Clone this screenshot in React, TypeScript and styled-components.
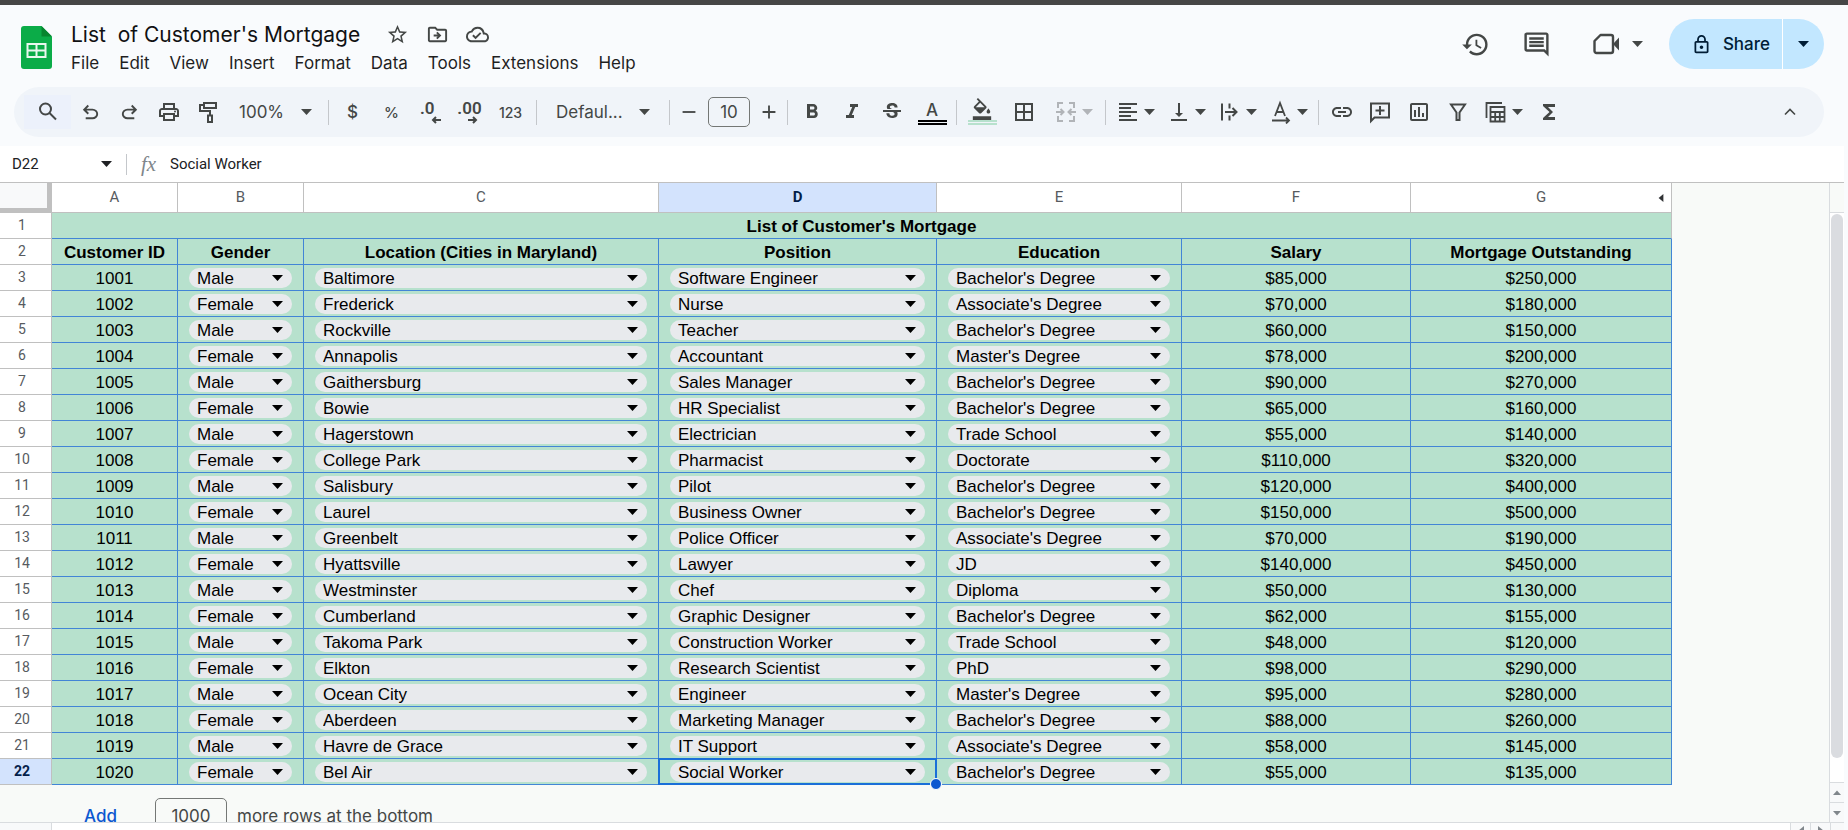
import React, { useState } from 'react';
import styled, { createGlobalStyle, css } from 'styled-components';
import {
  MdBorderAll,
  MdFormatAlignLeft,
  MdFormatBold,
  MdFormatColorFill,
  MdFormatItalic,
  MdFunctions,
  MdHistory,
  MdLink,
  MdOutlineCloudDone,
  MdOutlineComment,
  MdOutlineDriveFileMove,
  MdOutlineInsertChart,
  MdOutlineLock,
  MdOutlinePrint,
  MdStarBorder,
  MdStrikethroughS,
  MdVerticalAlignBottom,
} from 'react-icons/md';

const ui = "Inter, 'Open Sans', sans-serif";
const roboto = 'Roboto, Arial, sans-serif';
const arial = "'Liberation Sans', Arial, sans-serif";

const color = {
  chrome: '#f9fbfd',
  toolbar: '#f0f4f9',
  icon: '#444746',
  rule: '#c0c0c0',
  softRule: '#d9dcdf',
  canvas: '#f8faf8',
  cell: '#b7e1cd',
  cellLine: '#4285d6',
  chip: '#e8eaed',
  active: '#d3e3fd',
  select: '#1a6fd8',
};

const GlobalStyle = createGlobalStyle`
  *, *::before, *::after { box-sizing: border-box; }
  body { margin: 0; background: ${color.chrome}; font-family: ${ui}; }
  button, input, select { font: inherit; color: inherit; margin: 0; }
  button { border: 0; background: none; padding: 0; cursor: pointer; }
`;

const Page = styled.div`
  display: flex;
  flex-direction: column;
  height: 100vh;
  overflow: hidden;
`;

const TopStrip = styled.div`
  flex: none;
  height: 5px;
  background: #464646;
`;

/* ---------- header ---------- */

const Header = styled.header`
  flex: none;
  display: flex;
  align-items: flex-start;
  height: 82px;
  padding: 14px 24px 0 21px;
`;

const Logo = styled.svg`
  flex: none;
  width: 31px;
  height: 43px;
  margin-top: 7px;
`;

const Heading = styled.div`
  display: flex;
  flex-direction: column;
  margin-left: 19px;
`;

const TitleRow = styled.div`
  display: flex;
  align-items: center;
  height: 30px;
`;

const TitleInput = styled.input`
  width: 306px;
  height: 30px;
  padding: 0;
  border: 0;
  outline: 0;
  background: none;
  color: #101112;
  font-size: 21px;
`;

const TitleButton = styled.button`
  display: grid;
  place-items: center;
  width: 40px;
  height: 30px;
  color: ${color.icon};
  font-size: 23px;
`;

const Menus = styled.nav`
  display: flex;
  gap: 20px;
`;

const MenuButton = styled.button`
  height: 28px;
  color: #1f1f1f;
  font-size: 17px;
`;

const HeaderActions = styled.div`
  display: flex;
  align-items: center;
  height: 50px;
  margin-left: auto;
  color: ${color.icon};
`;

const ActionButton = styled.button`
  display: flex;
  align-items: center;
  justify-content: center;
  gap: 12px;
  width: 61px;
  height: 50px;
  font-size: 29px;
`;

const MeetButton = styled(ActionButton)`
  width: 102px;
`;

const ShareGroup = styled.div`
  display: flex;
  height: 50px;
  border-radius: 25px;
  overflow: hidden;
  background: #c2e7ff;
  color: #001d35;
`;

const ShareButton = styled.button`
  display: flex;
  align-items: center;
  gap: 11px;
  padding: 0 12px 0 22px;
  font-size: 17px;
  font-weight: 500;
  svg { font-size: 21px; }
`;

const ShareMenu = styled.button`
  display: grid;
  place-items: center;
  width: 42px;
  border-left: 1px solid #fff;
`;

/* ---------- toolbar ---------- */

const Toolbar = styled.div`
  flex: none;
  display: flex;
  align-items: center;
  height: 50px;
  margin: 0 24px 9px 14px;
  padding: 0 15px 0 10px;
  border-radius: 25px;
  background: ${color.toolbar};
  color: ${color.icon};
`;

const Tool = styled.button<{ $w?: number; $faded?: boolean; $lit?: boolean }>`
  flex: none;
  display: flex;
  align-items: center;
  justify-content: center;
  gap: 4px;
  width: ${(p) => p.$w ?? 39}px;
  height: 34px;
  font-size: 24px;
  ${(p) => p.$faded && css`color: #b1b4b8;`}
  ${(p) => p.$lit && css`background: #ecf1fb;`}
`;

const GlyphTool = styled(Tool)<{ $size: number }>`
  font-size: ${(p) => p.$size}px;
  font-weight: 500;
`;

const DecimalLabel = styled.span<{ $overhang?: number }>`
  display: flex;
  flex-direction: column;
  align-items: flex-start;
  font-family: ${roboto};
  font-size: 17px;
  font-weight: 600;
  line-height: 15px;
  svg { margin-left: ${(p) => p.$overhang ?? 0}px; }
`;

const SwatchLabel = styled.span<{ $swatch: string }>`
  display: grid;
  justify-items: center;
  align-content: end;
  width: 29px;
  height: 26px;
  font-size: 17px;
  font-weight: 500;
  line-height: 20px;
  &::after {
    content: '';
    width: 29px;
    height: 5px;
    border: solid ${(p) => p.$swatch};
    border-width: 2px 0;
  }
`;

const ToolSelect = styled.label<{ $w: number; $pad: number; $end: number }>`
  flex: none;
  display: flex;
  align-items: center;
  width: ${(p) => p.$w}px;
  padding: 0 ${(p) => p.$end}px 0 ${(p) => p.$pad}px;
  font-size: 17px;
  select {
    flex: 1;
    min-width: 0;
    padding: 0;
    border: 0;
    outline: 0;
    appearance: none;
    background: none;
  }
`;

const Divider = styled.span`
  flex: none;
  width: 1px;
  height: 25px;
  margin: 0 4px;
  background: #c4c7cb;
`;

const SizeInput = styled.input`
  flex: none;
  width: 42px;
  height: 30px;
  margin: 0 4px 0 5px;
  padding: 0;
  border: 1px solid #747775;
  border-radius: 5px;
  background: none;
  font-size: 17px;
  text-align: center;
`;

const CollapseTool = styled(Tool)`
  margin-left: auto;
`;

/* ---------- formula bar ---------- */

const FormulaBar = styled.div`
  flex: none;
  display: flex;
  align-items: center;
  height: 37px;
  margin-right: 4px;
  padding-left: 12px;
  border-bottom: 1px solid ${color.rule};
  background: #fff;
  color: #202124;
  font-family: ${roboto};
  font-size: 15px;
  input {
    padding: 0;
    border: 0;
    outline: 0;
    background: none;
  }
`;

const NameInput = styled.input`
  width: 89px;
`;

const FormulaInput = styled.input`
  flex: 1;
`;

const FormulaDivider = styled.span`
  width: 1px;
  height: 21px;
  margin: 0 14px;
  background: #c4c7cb;
`;

const FxMark = styled.span`
  width: 29px;
  color: #80868b;
  font-family: 'Liberation Serif', serif;
  font-size: 21px;
  font-style: italic;
`;

/* ---------- sheet ---------- */

const Workspace = styled.main`
  flex: 1;
  min-height: 0;
  display: flex;
  margin-right: 4px;
  background: ${color.canvas};
`;

const SheetArea = styled.div`
  flex: 1;
  min-width: 0;
  overflow: hidden;
`;

const Sheet = styled.table`
  table-layout: fixed;
  width: 1672px;
  border-collapse: separate;
  border-spacing: 0;
  font-family: ${arial};
  font-size: 17px;
  line-height: 20px;
  color: #000;
`;

const Corner = styled.td`
  height: 30px;
  padding: 0;
  border: solid ${color.rule};
  border-width: 0 5px 5px 0;
  background: #f8f9fa;
`;

const ColumnHead = styled.th<{ $active: boolean }>`
  position: relative;
  height: 30px;
  padding: 0 0 2px;
  border: solid ${color.rule};
  border-width: 0 1px 1px 0;
  background: ${(p) => (p.$active ? color.active : '#fff')};
  color: ${(p) => (p.$active ? '#041e49' : '#575b5f')};
  font-family: ${roboto};
  font-size: 15px;
  font-weight: ${(p) => (p.$active ? 700 : 400)};
`;

const HiddenColumnsButton = styled.button`
  position: absolute;
  top: 9px;
  right: 5px;
  width: 10px;
  height: 12px;
  display: grid;
  place-items: center;
  color: #303234;
`;

const RowHead = styled.th<{ $active: boolean }>`
  height: 26px;
  padding: 0 7px 2px 0;
  border: solid ${color.rule};
  border-width: 0 1px 1px 0;
  background: ${(p) => (p.$active ? color.active : '#fff')};
  color: ${(p) => (p.$active ? '#041e49' : '#575b5f')};
  font-family: ${roboto};
  font-size: 14px;
  font-weight: ${(p) => (p.$active ? 700 : 400)};
`;

const Cell = styled.td<{ $bold?: boolean; $list?: boolean }>`
  position: relative;
  height: 26px;
  padding: ${(p) => (p.$list ? '0 11px' : '2px 0 0')};
  border: solid ${color.cellLine};
  border-width: 0 1px 1px 0;
  background: ${color.cell};
  text-align: center;
  font-weight: ${(p) => (p.$bold ? 700 : 400)};
`;

const TitleCell = styled(Cell)`
  border-right-color: ${color.rule};
`;

const Chip = styled.label`
  display: flex;
  align-items: center;
  height: 20px;
  margin-top: 1px;
  padding-right: 9px;
  border-radius: 10px;
  background: ${color.chip};
`;

const ChipSelect = styled.select`
  flex: 1;
  min-width: 0;
  height: 20px;
  padding: 1px 0 0 8px;
  border: 0;
  outline: 0;
  appearance: none;
  background: none;
`;

const Selection = styled.div`
  position: absolute;
  z-index: 1;
  inset: -1px;
  border: 2px solid ${color.select};
  pointer-events: none;
  &::after {
    content: '';
    position: absolute;
    right: -7px;
    bottom: -7px;
    width: 12px;
    height: 12px;
    border: 1px solid #fff;
    border-radius: 50%;
    background: #0b57d0;
  }
`;

const AddRows = styled.form`
  display: flex;
  align-items: center;
  padding: 13px 0 0 84px;
  color: ${color.icon};
  font-size: 17px;
`;

const AddButton = styled.button`
  width: 71px;
  color: #0b57d0;
  font-weight: 500;
  text-align: left;
`;

const RowCount = styled.input`
  width: 72px;
  height: 36px;
  margin-right: 10px;
  padding: 0;
  border: 1px solid #747775;
  border-radius: 5px;
  background: none;
  text-align: center;
`;

/* ---------- scroll bars ---------- */

const VerticalScroll = styled.div`
  flex: none;
  display: flex;
  flex-direction: column;
  width: 15px;
  border-left: 1px solid ${color.softRule};
  background: #fff;
`;

const ScrollHead = styled.div`
  height: 30px;
  border-bottom: 1px solid ${color.softRule};
  background: ${color.canvas};
`;

const ScrollTrack = styled.div`
  flex: 1;
  display: flex;
  flex-direction: column;
  padding: 1px 1px 24px;
`;

const ScrollThumb = styled.div`
  flex: 1;
  border-radius: 6px;
  background: #dadce0;
`;

const ScrollStep = styled.button`
  display: grid;
  place-items: center;
  height: 20px;
  border-top: 1px solid ${color.softRule};
  background: #f8f9fa;
  color: #80868b;
`;

const Footer = styled.footer`
  flex: none;
  display: flex;
  height: 8px;
  margin-right: 4px;
  overflow: hidden;
  border-top: 1px solid ${color.softRule};
  background: #fff;
`;

const FooterCorner = styled.div`
  width: 52px;
  border-right: 1px solid ${color.softRule};
  background: #f8f9fa;
`;

const FooterSteps = styled.div`
  display: flex;
  margin-left: auto;
  background: #f8f9fa;
`;

const FooterStep = styled.button`
  width: 20px;
  height: 16px;
  display: grid;
  place-items: center;
  border-left: 1px solid ${color.softRule};
  color: #80868b;
`;

const FooterEnd = styled.div`
  width: 14px;
  border-left: 1px solid ${color.softRule};
`;

/* ---------- drawings ---------- */

const Arrow = () => (
  <svg width="11" height="6" viewBox="0 0 11 6" fill="currentColor" aria-hidden>
    <path d="M0 0h11L5.500 6z" />
  </svg>
);

const Triangle = ({ d, size = 8 }: { d: string; size?: number }) => (
  <svg width={size} height={size} viewBox="0 0 10 10" fill="currentColor" aria-hidden>
    <path d={d} />
  </svg>
);

const Line = ({ children, size = 24, width = 2 }: { children: React.ReactNode; size?: number; width?: number }) => (
  <svg width={size} height={size} viewBox="0 0 24 24" fill="none" stroke="currentColor" strokeWidth={width} aria-hidden>
    {children}
  </svg>
);

const Symbol = ({ d, size = 23 }: { d: string; size?: number }) => (
  <svg width={size} height={size} viewBox="0 -960 960 960" fill="currentColor" aria-hidden>
    <path d={d} />
  </svg>
);

const undoPath =
  'M280-200v-80h284q63 0 109.5-40T720-420q0-60-46.5-100T564-560H312l104 104-56 56-200-200 200-200 56 56-104 104h252q97 0 166.5 63T800-420q0 94-69.5 157T564-200H280Z';
const redoPath =
  'M396-200q-97 0-166.5-63T160-420q0-94 69.5-157T396-640h252L544-744l56-56 200 200-200 200-56-56 104-104H396q-63 0-109.5 40T240-420q0 60 46.5 100T396-280h284v80H396Z';

const SearchIcon = () => (
  <Line>
    <circle cx="9.500" cy="9" r="5.500" />
    <path d="M13.500 13l6.500 6.500" />
  </Line>
);

const PaintIcon = () => (
  <Line>
    <path d="M8 3h12v5H8zM8 5H4v6h10v4M12 15.500h4V22h-4z" />
  </Line>
);

const MergeIcon = () => (
  <Line>
    <path d="M9 3H4v5M15 3h5v5M9 21H4v-5M15 21h5v-5M2 12h7M6.500 9l3 3-3 3M22 12h-7M17.500 9l-3 3 3 3" />
  </Line>
);

const WrapIcon = () => (
  <Line>
    <path d="M4 3.500v17M11.500 3.500v5M11.500 15.500v5M7 12h11M14.500 8l4 4-4 4" />
  </Line>
);

const RotateIcon = () => (
  <Line width={1.8}>
    <path d="M6 16l5-13 5 13M7.800 12h6.400M3 20.500h17M17 17.500l3 3-3 3" />
  </Line>
);

const CommentPlusIcon = () => (
  <Line>
    <path d="M3 21V3.500h18v14H6.500zM12 6v9M7.500 10.500h9" />
  </Line>
);

const FilterIcon = () => (
  <Line>
    <path d="M5 4.500h14l-5.500 8V20h-3v-7.500z" />
  </Line>
);

const TableViewsIcon = () => (
  <Line width={1.8}>
    <path d="M2.500 18V3H18" />
    <path d="M6.500 7h14v14.500h-14zM6.500 12h14M6.500 17h14M11.200 12v9.500M15.800 12v9.500" />
  </Line>
);

const MeetIcon = () => (
  <svg width="27" height="22" viewBox="0 0 27 22" aria-hidden>
    <path d="M7.500 2H18a2 2 0 0 1 2 2v14a2 2 0 0 1-2 2H3.500a2 2 0 0 1-2-2V8z" fill="none" stroke="currentColor" strokeWidth="2.4" strokeLinejoin="round" />
    <path d="M20 11l6-6.500v13z" fill="currentColor" />
  </svg>
);

const StepArrow = ({ flip = false }: { flip?: boolean }) => (
  <svg width="10" height="8" viewBox="0 0 10 8" fill="none" stroke="currentColor" strokeWidth="2" aria-hidden>
    <path d={flip ? 'M0 4h8M5 1l3 3-3 3' : 'M10 4H2M5 1L2 4l3 3'} />
  </svg>
);

const SheetsLogo = () => (
  <Logo viewBox="0 0 31 43" role="img" aria-label="Sheets">
    <path d="M3 0h17.500L31 10.500V40a3 3 0 0 1-3 3H3a3 3 0 0 1-3-3V3a3 3 0 0 1 3-3z" fill="#0bac48" />
    <path d="M20.500 0L31 10.500H20.500z" fill="#07852f" />
    <path d="M6.500 18h18v13h-18zM6.500 24.500h18M15.500 18v13" fill="none" stroke="#e9f7ee" strokeWidth="2" />
  </Logo>
);

/* ---------- data ---------- */

type Row = [number, string, string, string, string, string, string];

const rows: Row[] = [
  [1001, 'Male', 'Baltimore', 'Software Engineer', "Bachelor's Degree", '$85,000', '$250,000'],
  [1002, 'Female', 'Frederick', 'Nurse', "Associate's Degree", '$70,000', '$180,000'],
  [1003, 'Male', 'Rockville', 'Teacher', "Bachelor's Degree", '$60,000', '$150,000'],
  [1004, 'Female', 'Annapolis', 'Accountant', "Master's Degree", '$78,000', '$200,000'],
  [1005, 'Male', 'Gaithersburg', 'Sales Manager', "Bachelor's Degree", '$90,000', '$270,000'],
  [1006, 'Female', 'Bowie', 'HR Specialist', "Bachelor's Degree", '$65,000', '$160,000'],
  [1007, 'Male', 'Hagerstown', 'Electrician', 'Trade School', '$55,000', '$140,000'],
  [1008, 'Female', 'College Park', 'Pharmacist', 'Doctorate', '$110,000', '$320,000'],
  [1009, 'Male', 'Salisbury', 'Pilot', "Bachelor's Degree", '$120,000', '$400,000'],
  [1010, 'Female', 'Laurel', 'Business Owner', "Bachelor's Degree", '$150,000', '$500,000'],
  [1011, 'Male', 'Greenbelt', 'Police Officer', "Associate's Degree", '$70,000', '$190,000'],
  [1012, 'Female', 'Hyattsville', 'Lawyer', 'JD', '$140,000', '$450,000'],
  [1013, 'Male', 'Westminster', 'Chef', 'Diploma', '$50,000', '$130,000'],
  [1014, 'Female', 'Cumberland', 'Graphic Designer', "Bachelor's Degree", '$62,000', '$155,000'],
  [1015, 'Male', 'Takoma Park', 'Construction Worker', 'Trade School', '$48,000', '$120,000'],
  [1016, 'Female', 'Elkton', 'Research Scientist', 'PhD', '$98,000', '$290,000'],
  [1017, 'Male', 'Ocean City', 'Engineer', "Master's Degree", '$95,000', '$280,000'],
  [1018, 'Female', 'Aberdeen', 'Marketing Manager', "Bachelor's Degree", '$88,000', '$260,000'],
  [1019, 'Male', 'Havre de Grace', 'IT Support', "Associate's Degree", '$58,000', '$145,000'],
  [1020, 'Female', 'Bel Air', 'Social Worker', "Bachelor's Degree", '$55,000', '$135,000'],
];

const headings = [
  'Customer ID',
  'Gender',
  'Location (Cities in Maryland)',
  'Position',
  'Education',
  'Salary',
  'Mortgage Outstanding',
];

const columns = [
  { letter: 'A', width: 126 },
  { letter: 'B', width: 126 },
  { letter: 'C', width: 355 },
  { letter: 'D', width: 278 },
  { letter: 'E', width: 245 },
  { letter: 'F', width: 229 },
  { letter: 'G', width: 261 },
];

const menus = ['File', 'Edit', 'View', 'Insert', 'Format', 'Data', 'Tools', 'Extensions', 'Help'];

const isList = (column: number) => column >= 1 && column <= 4;

/* ---------- parts ---------- */

function ListCell({ value, label, selected }: { value: string; label: string; selected: boolean }) {
  return (
    <Cell $list>
      <Chip>
        <ChipSelect aria-label={label} defaultValue={value}>
          <option>{value}</option>
        </ChipSelect>
        <Arrow />
      </Chip>
      {selected && <Selection />}
    </Cell>
  );
}

function SheetTable() {
  return (
    <Sheet>
      <colgroup>
        <col width={52} />
        {columns.map((c) => (
          <col key={c.letter} width={c.width} />
        ))}
      </colgroup>
      <thead>
        <tr>
          <Corner />
          {columns.map((c) => (
            <ColumnHead key={c.letter} scope="col" $active={c.letter === 'D'}>
              {c.letter}
              {c.letter === 'G' && (
                <HiddenColumnsButton aria-label="Show hidden columns">
                  <Triangle d="M8 0v10L2 5z" />
                </HiddenColumnsButton>
              )}
            </ColumnHead>
          ))}
        </tr>
      </thead>
      <tbody>
        <tr>
          <RowHead scope="row" $active={false}>1</RowHead>
          <TitleCell colSpan={7} $bold>List of Customer's Mortgage</TitleCell>
        </tr>
        <tr>
          <RowHead scope="row" $active={false}>2</RowHead>
          {headings.map((h) => (
            <Cell key={h} $bold>{h}</Cell>
          ))}
        </tr>
        {rows.map((row, i) => (
          <tr key={row[0]}>
            <RowHead scope="row" $active={i === 19}>{i + 3}</RowHead>
            {row.map((value, c) =>
              isList(c) ? (
                <ListCell
                  key={headings[c]}
                  value={String(value)}
                  label={`${headings[c]}, customer ${row[0]}`}
                  selected={i === 19 && c === 3}
                />
              ) : (
                <Cell key={headings[c]}>{value}</Cell>
              ),
            )}
          </tr>
        ))}
      </tbody>
    </Sheet>
  );
}

function ToolbarRow() {
  return (
    <Toolbar role="toolbar" aria-label="Main">
      <Tool $w={47} $lit aria-label="Search the menus"><SearchIcon /></Tool>
      <Tool aria-label="Undo"><Symbol d={undoPath} /></Tool>
      <Tool aria-label="Redo"><Symbol d={redoPath} /></Tool>
      <Tool aria-label="Print"><MdOutlinePrint /></Tool>
      <Tool aria-label="Paint format"><PaintIcon /></Tool>
      <ToolSelect $w={97} $pad={12} $end={12}>
        <select aria-label="Zoom"><option>100%</option></select>
        <Arrow />
      </ToolSelect>
      <Divider />
      <GlyphTool $size={17} aria-label="Format as currency">$</GlyphTool>
      <GlyphTool $size={15} aria-label="Format as percent">%</GlyphTool>
      <Tool aria-label="Decrease decimal places">
        <DecimalLabel $overhang={11}>.0<StepArrow /></DecimalLabel>
      </Tool>
      <Tool aria-label="Increase decimal places">
        <DecimalLabel $overhang={11}>.00<StepArrow flip /></DecimalLabel>
      </Tool>
      <GlyphTool $size={14} $w={43} aria-label="More formats">123</GlyphTool>
      <Divider />
      <ToolSelect $w={124} $pad={15} $end={15}>
        <select aria-label="Font"><option>Defaul...</option></select>
        <Arrow />
      </ToolSelect>
      <Divider />
      <Tool $w={29} aria-label="Decrease font size"><Line size={22}><path d="M5 12h14" /></Line></Tool>
      <SizeInput aria-label="Font size" defaultValue="10" />
      <Tool $w={29} aria-label="Increase font size"><Line size={22}><path d="M5 12h14M12 5v14" /></Line></Tool>
      <Divider />
      <Tool $w={40} aria-label="Bold"><MdFormatBold /></Tool>
      <Tool $w={40} aria-label="Italic"><MdFormatItalic /></Tool>
      <Tool $w={40} aria-label="Strikethrough"><MdStrikethroughS /></Tool>
      <Tool $w={40} aria-label="Text color"><SwatchLabel $swatch="#000">A</SwatchLabel></Tool>
      <Divider />
      <Tool $w={42} aria-label="Fill color"><SwatchLabel $swatch={color.cell}><MdFormatColorFill size={22} /></SwatchLabel></Tool>
      <Tool $w={42} aria-label="Borders"><MdBorderAll /></Tool>
      <Tool $w={56} $faded aria-label="Merge cells"><MergeIcon /><Arrow /></Tool>
      <Divider />
      <Tool $w={51} aria-label="Horizontal align"><MdFormatAlignLeft /><Arrow /></Tool>
      <Tool $w={51} aria-label="Vertical align"><MdVerticalAlignBottom /><Arrow /></Tool>
      <Tool $w={51} aria-label="Text wrapping"><WrapIcon /><Arrow /></Tool>
      <Tool $w={51} aria-label="Text rotation"><RotateIcon /><Arrow /></Tool>
      <Divider />
      <Tool aria-label="Insert link" $w={37}><MdLink /></Tool>
      <Tool aria-label="Insert comment"><CommentPlusIcon /></Tool>
      <Tool aria-label="Insert chart"><MdOutlineInsertChart /></Tool>
      <Tool aria-label="Create a filter"><FilterIcon /></Tool>
      <Tool $w={52} aria-label="Table views"><TableViewsIcon /><Arrow /></Tool>
      <Tool aria-label="Functions"><MdFunctions /></Tool>
      <CollapseTool aria-label="Hide the menus"><Line size={20}><path d="M6 15l6-6 6 6" /></Line></CollapseTool>
    </Toolbar>
  );
}

export default function App() {
  const [title, setTitle] = useState("List  of Customer's Mortgage");
  const [formula, setFormula] = useState('Social Worker');

  return (
    <Page>
      <GlobalStyle />
      <TopStrip />
      <Header>
        <SheetsLogo />
        <Heading>
          <TitleRow>
            <TitleInput aria-label="Title" value={title} onChange={(e) => setTitle(e.target.value)} />
            <TitleButton aria-label="Star"><MdStarBorder /></TitleButton>
            <TitleButton aria-label="Move"><MdOutlineDriveFileMove /></TitleButton>
            <TitleButton aria-label="Document status"><MdOutlineCloudDone /></TitleButton>
          </TitleRow>
          <Menus>
            {menus.map((m) => (
              <MenuButton key={m}>{m}</MenuButton>
            ))}
          </Menus>
        </Heading>
        <HeaderActions>
          <ActionButton aria-label="Version history"><MdHistory /></ActionButton>
          <ActionButton aria-label="Comments"><MdOutlineComment /></ActionButton>
          <MeetButton aria-label="Join a call"><MeetIcon /><Arrow /></MeetButton>
          <ShareGroup>
            <ShareButton><MdOutlineLock />Share</ShareButton>
            <ShareMenu aria-label="Share options"><Arrow /></ShareMenu>
          </ShareGroup>
        </HeaderActions>
      </Header>

      <ToolbarRow />

      <FormulaBar>
        <NameInput aria-label="Name box" defaultValue="D22" />
        <Arrow />
        <FormulaDivider />
        <FxMark>fx</FxMark>
        <FormulaInput aria-label="Formula" value={formula} onChange={(e) => setFormula(e.target.value)} />
      </FormulaBar>

      <Workspace>
        <SheetArea>
          <SheetTable />
          <AddRows onSubmit={(e) => e.preventDefault()}>
            <AddButton type="submit">Add</AddButton>
            <RowCount id="row-count" defaultValue="1000" />
            <label htmlFor="row-count">more rows at the bottom</label>
          </AddRows>
        </SheetArea>
        <VerticalScroll>
          <ScrollHead />
          <ScrollTrack><ScrollThumb /></ScrollTrack>
          <ScrollStep aria-label="Scroll up"><Triangle d="M0 7.500h10L5 2z" /></ScrollStep>
          <ScrollStep aria-label="Scroll down"><Triangle d="M0 2.500h10L5 8z" /></ScrollStep>
        </VerticalScroll>
      </Workspace>

      <Footer>
        <FooterCorner />
        <FooterSteps>
          <FooterStep aria-label="Scroll left"><Triangle size={10} d="M8 0v10L2 5z" /></FooterStep>
          <FooterStep aria-label="Scroll right"><Triangle size={10} d="M2 0v10l6-5z" /></FooterStep>
          <FooterEnd />
        </FooterSteps>
      </Footer>
    </Page>
  );
}
